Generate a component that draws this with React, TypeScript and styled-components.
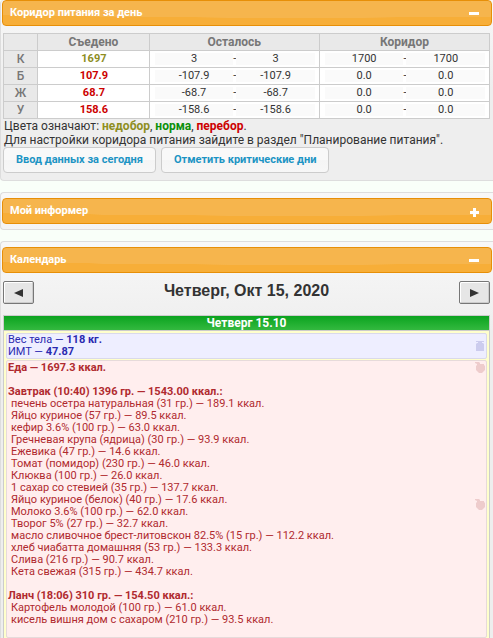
import React, { useState } from "react";
import styled, { createGlobalStyle } from "styled-components";

const UI_FONT = `"Trebuchet MS", Roboto, sans-serif`;

const GlobalStyle = createGlobalStyle`
  *, *::before, *::after { box-sizing: border-box; }
  body {
    margin: 0;
    background: #f9fff9;
    color: #333;
    font-family: ${UI_FONT};
    font-size: 12px;
    line-height: 14px;
  }
`;

const Page = styled.main`
  display: flex;
  flex-direction: column;
  gap: 11px;
  overflow-x: hidden;
`;

const Panel = styled.section<{ $first?: boolean }>`
  border: 1px solid #ddd;
  border-width: ${(p) => (p.$first ? "0 0 1px 1px" : "1px 0 1px 1px")};
  border-radius: 4px 0 0 4px;
  padding: ${(p) => (p.$first ? "0" : "5px")} 1px ${(p) => (p.$first ? "7px" : "5px")} 1px;
  background: linear-gradient(#f8f8f8, #eee 90px);
`;

const Header = styled.header`
  display: flex;
  align-items: center;
  justify-content: space-between;
  height: 26px;
  padding: 0 12px 0 7px;
  border: 1px solid #e78f08;
  border-radius: 4px;
  background: radial-gradient(ellipse 110% 70% at 60% 0, #f6b54d 99%, #f7ae38 100%);
  color: #fff;
`;

const HeaderTitle = styled.h2`
  margin: 0;
  font-size: 11px;
  line-height: 14px;
  font-weight: 700;
`;

const Toggle = styled.button`
  display: flex;
  width: 10px;
  height: 10px;
  margin-top: 4px;
  padding: 0;
  border: 0;
  background: none;
  color: #fff;
  cursor: pointer;
`;

const Body = styled.div`
  padding: 7px 2px 0 1px;
`;

const Corridor = styled.table`
  width: 100%;
  table-layout: fixed;
  border-collapse: collapse;
  background: #fff;
  font-size: 11px;
  line-height: 16px;
  text-align: center;
`;

const Col = styled.col<{ $share: number }>`
  width: ${(p) => p.$share}%;
`;

const HeadCell = styled.th`
  height: 17px;
  padding: 0;
  border: 1px solid #ccc;
  background: #e9e9e9;
  color: #777;
  font-size: 12px;
  font-weight: ${(p) => (p.scope === "row" ? 500 : 700)};
`;

const Cell = styled.td<{ $color?: string }>`
  height: 17px;
  padding: 0 4px 0 5px;
  border: 1px solid #ccc;
  color: ${(p) => p.$color ?? "#333"};
  font-weight: ${(p) => (p.$color ? 700 : 400)};
`;

const Range = styled.div`
  display: flex;
  align-items: center;
`;

const RangeInput = styled.input`
  flex: 1;
  min-width: 0;
  height: 12px;
  padding: 0;
  border: 0;
  background: #fafafa;
  color: #333;
  font: 11px/12px ${UI_FONT};
  text-align: center;
`;

const Note = styled.p`
  margin: 0 0 0 1px;
  color: #333;
`;

const Word = styled.b<{ $color: string }>`
  color: ${(p) => p.$color};
`;

const Actions = styled.div`
  display: flex;
  gap: 5px;
`;

const ActionButton = styled.button`
  height: 26px;
  padding: 0 12px;
  border: 1px solid #ccc;
  border-radius: 4px;
  background: linear-gradient(#f9f9f9 50%, #f5f5f5 50%, #f7f7f7);
  color: #1c94c4;
  font: 700 11px/14px ${UI_FONT};
  cursor: pointer;
`;

const DayNav = styled.div`
  display: flex;
  align-items: flex-start;
  justify-content: space-between;
  padding-top: 1px;
  margin-bottom: 11px;
`;

const NavButton = styled.button`
  display: flex;
  align-items: center;
  justify-content: center;
  width: 31px;
  height: 23px;
  padding: 0;
  border: 1px solid #777;
  border-radius: 2px;
  background: #e6e6e6;
  box-shadow: inset 1px 1px #fff, inset -1px -1px #ccc;
  color: #333;
  cursor: pointer;
`;

const DayTitle = styled.h1`
  margin: 0;
  color: #333;
  font: 700 16px/20px "Liberation Sans", Arial, sans-serif;
`;

const Day = styled.div`
  border: 1px solid #ccc;
  background: #ffc;
`;

const DayHead = styled.h3`
  margin: 0;
  border-bottom: 1px solid #ccc;
  background: linear-gradient(#0ba31f, #33b93f);
  color: #fff;
  font-size: 12px;
  line-height: 14px;
  text-align: center;
`;

const Entries = styled.div`
  display: flex;
  flex-direction: column;
  gap: 1px;
  padding: 2px;
`;

const Entry = styled.div<{ $food?: boolean }>`
  position: relative;
  padding: ${(p) => (p.$food ? "1px" : "0")} 0 0 1px;
  border: 1px solid ${(p) => (p.$food ? "#e6dada" : "#d9d9ea")};
  border-radius: 2px;
  background: ${(p) => (p.$food ? "#fee" : "#eef")};
  color: ${(p) => (p.$food ? "#b02a2f" : "#2a2ab0")};
  font-size: 11px;
  line-height: 12px;
`;

const Line = styled.div`
  min-height: 12px;
`;

const Meal = styled.section`
  margin-top: 12px;

  &:last-of-type {
    margin-bottom: 11px;
  }
`;

const MealTitle = styled.h4`
  margin: 0;
  font-size: 11px;
  line-height: 12px;
`;

const Foods = styled.ul`
  margin: 0;
  padding: 0 0 0 3px;
  list-style: none;
`;

const Marker = styled.svg<{ $top: string }>`
  position: absolute;
  right: 1px;
  top: ${(p) => p.$top};
  width: 10px;
  height: 12px;
`;

const Minus = () => (
  <svg width="10" height="10" viewBox="0 0 10 10"><path d="M0 2h10v3H0z" fill="currentColor" /></svg>
);
const Plus = () => (
  <svg width="10" height="10" viewBox="0 0 10 10"><path d="M4 0h3v3h3v3H7v3H4V6H1V3h3z" fill="currentColor" /></svg>
);
const WeightIcon = () => (
  <Marker $top="7px" viewBox="0 0 10 12" aria-hidden="true">
    <path d="M1 0h8v1H7v1h1l1 1v7H1V3l1-1h1V1H1z" fill="#ccccee" />
  </Marker>
);
const AppleIcon = ({ top }: { top: string }) => (
  <Marker $top={top} viewBox="0 0 10 12" aria-hidden="true">
    <path d="M0 0h4l1 1v1h4V3l1 1v4L9 9 8 10 7 11H4L2 9 1 8V4L2 3V2L0 1z" fill="#eecccc" />
  </Marker>
);

function Box({ title, open: initial, first, children }: { title: string; open: boolean; first?: boolean; children?: React.ReactNode }) {
  const [open, setOpen] = useState(initial);
  return (
    <Panel $first={first}>
      <Header>
        <HeaderTitle>{title}</HeaderTitle>
        <Toggle type="button" aria-label={title} aria-expanded={open} onClick={() => setOpen(!open)}>
          {open ? <Minus /> : <Plus />}
        </Toggle>
      </Header>
      {open && children && <Body>{children}</Body>}
    </Panel>
  );
}

const OLIVE = "#8e8e1f";
const GREEN = "#0a8f0a";
const RED = "#cc0000";

const rows = [
  { name: "К", eaten: "1697", color: OLIVE, left: "3", range: "1700" },
  { name: "Б", eaten: "107.9", color: RED, left: "-107.9", range: "0.0" },
  { name: "Ж", eaten: "68.7", color: RED, left: "-68.7", range: "0.0" },
  { name: "У", eaten: "158.6", color: RED, left: "-158.6", range: "0.0" },
];

const meals = [
  {
    title: "Завтрак (10:40) 1396 гр. — 1543.00 ккал.:",
    foods: [
      "печень осетра натуральная (31 гр.) — 189.1 ккал.",
      "Яйцо куриное (57 гр.) — 89.5 ккал.",
      "кефир 3.6% (100 гр.) — 63.0 ккал.",
      "Гречневая крупа (ядрица) (30 гр.) — 93.9 ккал.",
      "Ежевика (47 гр.) — 14.6 ккал.",
      "Томат (помидор) (230 гр.) — 46.0 ккал.",
      "Клюква (100 гр.) — 26.0 ккал.",
      "1 сахар со стевией (35 гр.) — 137.7 ккал.",
      "Яйцо куриное (белок) (40 гр.) — 17.6 ккал.",
      "Молоко 3.6% (100 гр.) — 62.0 ккал.",
      "Творог 5% (27 гр.) — 32.7 ккал.",
      "масло сливочное брест-литовскон 82.5% (15 гр.) — 112.2 ккал.",
      "хлеб чиабатта домашняя (53 гр.) — 133.3 ккал.",
      "Слива (216 гр.) — 90.7 ккал.",
      "Кета свежая (315 гр.) — 434.7 ккал.",
    ],
  },
  {
    title: "Ланч (18:06) 310 гр. — 154.50 ккал.:",
    foods: [
      "Картофель молодой (100 гр.) — 61.0 ккал.",
      "кисель вишня дом с сахаром (210 гр.) — 93.5 ккал.",
    ],
  },
];

const Pair = ({ value, label }: { value: string; label: string }) => (
  <Range>
    <RangeInput readOnly value={value} aria-label={`${label}, от`} />
    <span>-</span>
    <RangeInput readOnly value={value} aria-label={`${label}, до`} />
  </Range>
);

export default function App() {
  return (
    <>
      <GlobalStyle />
      <Page>
        <Box title="Коридор питания за день" open first>
          <Corridor>
            <colgroup>
              <Col $share={7} />
              <Col $share={23} />
              <Col $share={35} />
              <Col $share={35} />
            </colgroup>
            <thead>
              <tr>
                <HeadCell as="td" />
                <HeadCell scope="col">Съедено</HeadCell>
                <HeadCell scope="col">Осталось</HeadCell>
                <HeadCell scope="col">Коридор</HeadCell>
              </tr>
            </thead>
            <tbody>
              {rows.map((r) => (
                <tr key={r.name}>
                  <HeadCell scope="row">{r.name}</HeadCell>
                  <Cell $color={r.color}>{r.eaten}</Cell>
                  <Cell><Pair value={r.left} label={`${r.name}: осталось`} /></Cell>
                  <Cell><Pair value={r.range} label={`${r.name}: коридор`} /></Cell>
                </tr>
              ))}
            </tbody>
          </Corridor>
          <Note>
            Цвета означают: <Word $color={OLIVE}>недобор</Word>, <Word $color={GREEN}>норма</Word>,{" "}
            <Word $color={RED}>перебор</Word>.
          </Note>
          <Note>Для настройки коридора питания зайдите в раздел "Планирование питания".</Note>
          <Actions>
            <ActionButton type="button">Ввод данных за сегодня</ActionButton>
            <ActionButton type="button">Отметить критические дни</ActionButton>
          </Actions>
        </Box>

        <Box title="Мой информер" open={false} />

        <Box title="Календарь" open>
          <DayNav>
            <NavButton type="button" aria-label="Предыдущий день">
              <svg width="9" height="8" viewBox="0 0 9 8"><path d="M9 0v8L0 4z" fill="currentColor" /></svg>
            </NavButton>
            <DayTitle>Четверг, Окт 15, 2020</DayTitle>
            <NavButton type="button" aria-label="Следующий день">
              <svg width="9" height="8" viewBox="0 0 9 8"><path d="M0 0v8l9-4z" fill="currentColor" /></svg>
            </NavButton>
          </DayNav>
          <Day>
            <DayHead>Четверг 15.10</DayHead>
            <Entries>
              <Entry>
                <Line>Вес тела — <b>118 кг.</b></Line>
                <Line>ИМТ — <b>47.87</b></Line>
                <WeightIcon />
              </Entry>
              <Entry $food>
                <Line><b>Еда — 1697.3 ккал.</b></Line>
                {meals.map((m) => (
                  <Meal key={m.title}>
                    <MealTitle>{m.title}</MealTitle>
                    <Foods>
                      {m.foods.map((f) => <li key={f}>{f}</li>)}
                    </Foods>
                  </Meal>
                ))}
                <AppleIcon top="1px" />
                <AppleIcon top="50%" />
              </Entry>
            </Entries>
          </Day>
        </Box>
      </Page>
    </>
  );
}
